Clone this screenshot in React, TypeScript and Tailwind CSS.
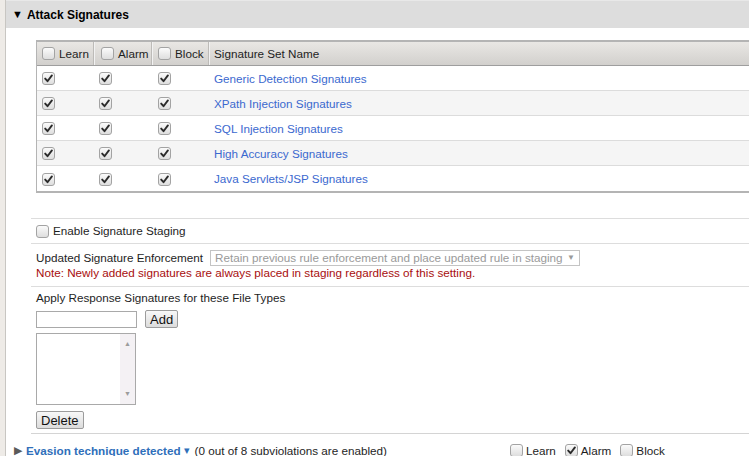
const rows = [
  "Generic Detection Signatures",
  "XPath Injection Signatures",
  "SQL Injection Signatures",
  "High Accuracy Signatures",
  "Java Servlets/JSP Signatures",
];

function Box({ checked = false }: { checked?: boolean }) {
  return (
    <span className="inline-flex items-center justify-center w-[13px] h-[13px] shrink-0 rounded-[3px] border border-[#a3a3a3] bg-gradient-to-b from-[#fbfbfb] to-[#dedede]">
      {checked && (
        <svg width="9" height="9" viewBox="0 0 9 9">
          <path d="M1.2 4.6 L3.5 7.2 L7.9 1.4" fill="none" stroke="#2b2b2b" strokeWidth="1.9" strokeLinecap="round" strokeLinejoin="round" />
        </svg>
      )}
    </span>
  );
}

function Btn({ children }: { children: React.ReactNode }) {
  return (
    <button className="h-[18px] px-[4px] text-[13px] leading-none text-[#111] rounded-[2px] border border-[#9c9c9c] bg-gradient-to-b from-[#f8f8f8] to-[#dcdcdc]">
      {children}
    </button>
  );
}

export default function App() {
  return (
    <div
      className="w-[749px] h-[456px] overflow-hidden bg-white flex text-[11.7px] text-[#1e1e1e]"
      style={{ fontFamily: '"Liberation Sans", Arial, sans-serif' }}
    >
      {/* left gutter */}
      <div className="w-[6px] shrink-0 bg-[#eeebe7] border-r border-[#c8c6c2]" />

      <div className="flex-1 flex flex-col min-w-0">
        {/* section header */}
        <div className="h-[28px] shrink-0 bg-[#dddddd] border-t border-[#e8e8e8] flex items-center pl-[6px] gap-[4px]">
          <span className="text-[11px] text-black">▼</span>
          <span className="font-bold text-[12px] text-black">Attack Signatures</span>
        </div>

        <div className="pl-[25px] pt-[12px]">
          {/* signature sets table */}
          <div className="ml-[5px] w-[760px] border-t-2 border-b-2 border-l border-[#b4b4b4]">
            <div className="h-[24px] flex items-stretch bg-gradient-to-b from-[#e9e7e4] to-[#d2d0cd] border-b border-[#9e9e9e]">
              <div className="w-[57px] flex items-center gap-[4px] pl-[5px]">
                <Box /> Learn
              </div>
              <div className="w-[58px] flex items-center gap-[4px] pl-[6px] border-l border-[#f2f2f2] shadow-[-1px_0_0_#bdbbb8]">
                <Box /> Alarm
              </div>
              <div className="w-[57px] flex items-center gap-[4px] pl-[5px] border-l border-[#f2f2f2] shadow-[-1px_0_0_#bdbbb8]">
                <Box /> Block
              </div>
              <div className="flex-1 flex items-center pl-[4px] border-l border-[#f2f2f2] shadow-[-1px_0_0_#bdbbb8]">
                Signature Set Name
              </div>
            </div>
            {rows.map((name, i) => (
              <div
                key={name}
                className={`h-[25px] flex items-center pt-[1px] ${i % 2 ? "bg-[#f5f5f5]" : "bg-white"} ${i < rows.length - 1 ? "border-b border-[#dcdcdc]" : ""}`}
              >
                <div className="w-[57px] pl-[5px] flex"><Box checked /></div>
                <div className="w-[58px] pl-[5px] flex"><Box checked /></div>
                <div className="w-[57px] pl-[6px] flex"><Box checked /></div>
                <div className="pl-[5px] text-[#3b69cf]">{name}</div>
              </div>
            ))}
          </div>

          <div className="h-[25px]" />

          {/* staging */}
          <div className="border-t border-[#dddddd] h-[25px] flex items-center gap-[4px] pl-[5px]">
            <Box /> Enable Signature Staging
          </div>

          <div className="border-t border-[#dddddd] pl-[5px] pt-[5px] pb-[6px]">
            <div className="flex items-center gap-[7px] h-[17px]">
              <span>Updated Signature Enforcement</span>
              <div className="w-[370px] h-[16px] border border-[#c4c4c4] flex items-center justify-between px-[4px] text-[#9a9a9a] whitespace-nowrap overflow-hidden">
                <span>Retain previous rule enforcement and place updated rule in staging</span>
                <span className="text-[8px]">▼</span>
              </div>
            </div>
            <div className="text-[#a80e0e] leading-[14px]">
              Note: Newly added signatures are always placed in staging regardless of this setting.
            </div>
          </div>

          {/* response signature file types */}
          <div className="border-t border-[#dddddd] pl-[5px] pt-[4px] pb-[4px]">
            <div className="leading-[14px]">Apply Response Signatures for these File Types</div>
            <div className="flex items-center gap-[8px] mt-[5px]">
              <div className="w-[101px] h-[17px] border border-[#a9a9a9] bg-white" />
              <Btn>Add</Btn>
            </div>
            <div className="mt-[5px] w-[100px] h-[72px] border border-[#a9a9a9] flex justify-end">
              <div className="w-[15px] h-full bg-[#f4f1f4] flex flex-col items-center justify-between py-[5px] text-[7px] text-[#9c9c9c]">
                <span>▲</span>
                <span>▼</span>
              </div>
            </div>
            <div className="mt-[6px]">
              <Btn>Delete</Btn>
            </div>
          </div>
          <div className="h-px bg-[#d4d4d4]" />
        </div>

        {/* next violation row */}
        <div className="h-[30px] shrink-0 flex items-center pt-[3px] pl-[8px]">
          <span className="text-[11px] text-[#5a5a5a] mr-[4px]">▶</span>
          <span className="font-bold text-[#2f6fba]">Evasion technique detected</span>
          <span className="text-[#2f6fba] text-[11px] ml-[3px] mr-[5px]">▾</span>
          <span>(0 out of 8 subviolations are enabled)</span>
          <div className="ml-[123px] flex items-center gap-[3px]">
            <Box /> <span className="mr-[6px]">Learn</span>
            <Box checked /> <span className="mr-[6px]">Alarm</span>
            <Box /> <span>Block</span>
          </div>
        </div>
      </div>
    </div>
  );
}
